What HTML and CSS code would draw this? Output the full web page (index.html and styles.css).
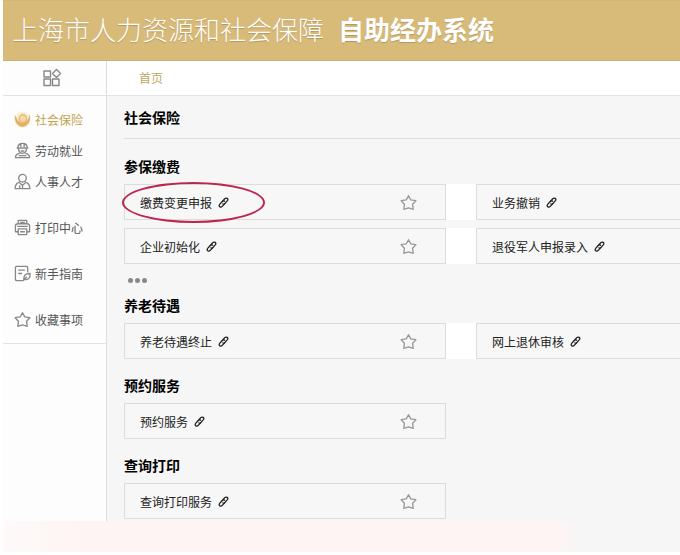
FILE: index.html
```html
<!DOCTYPE html>
<html lang="zh-CN">
<head>
<meta charset="utf-8">
<meta name="viewport" content="width=device-width, initial-scale=1">
<title>上海市人力资源和社会保障自助经办系统</title>
<link rel="stylesheet" href="styles.css">
</head>
<body>
<svg class="sprite" aria-hidden="true">
  <symbol id="star" viewBox="0 0 18 18"><path d="M9 1.8 L11.4 6.200 L16.800 7.1 L13.3 10.9 L14 16.2 L9 14.800 L4 16.2 L4.7 10.9 L1.2 7.1 L6.600 6.200 Z"/></symbol>
  <symbol id="link" viewBox="0 0 12 12"><path d="M4.300 5.300 L7.300 1.900 C9.300 .2 11.600 1.800 10.300 4 L7.500 7.200 C6.600 8 5.400 7.800 5 7"/><path d="M7.500 5.200 C7 4.200 5.600 4 4.600 4.900 L1.800 8 C.3 10.200 2.700 12 4.700 10.200 L7.700 6.900"/></symbol>
</svg>
<div class="page">
  <header class="banner">
    <h1 class="title"><span class="org">上海市人力资源和社会保障</span><strong>自助经办系统</strong></h1>
  </header>
  <div class="body">
    <aside class="side">
      <button class="apps" type="button" aria-label="全部应用">
        <svg viewBox="0 0 20 20"><path d="M2 3h6.500v6H2z M2 11h6.500v6.500H2z M10.500 11H17v6.500h-6.500z"/><path d="M14.500 1.500 L18.500 5.500 L14.500 9.500 L10.500 5.500 Z"/></svg>
      </button>
      <nav class="menu">
        <ul class="group">
          <li><a class="item active" href="#"><svg viewBox="0 0 18 18"><circle class="halo" cx="9" cy="9" r="8.500"/><path class="swirl" d="M1 4 C0 10 3 15.500 9 17 C15 16 18.500 10 16.500 3.500 C16 9 13 12.500 9 12.500 C4.500 12.500 3 8 1 4Z"/><circle class="pearl" cx="9.500" cy="8" r="4"/></svg>社会保险</a></li>
          <li><a class="item" href="#"><svg viewBox="0 0 18 18"><path d="M4 6.500 C4 3.500 6 1.500 9 1.500 S14 3.500 14 6.500 M2.800 6.500H15.200 M7.300 2v4.500 M10.700 2v4.500 M4.800 7 C4.800 10 6.500 12 9 12 S13.200 10 13.200 7 M7 9.500h4 M6 12 C3 12.500 1.500 14 1.500 16.500 H16.500 C16.500 14 15 12.500 12 12 M5 14.500h8"/></svg>劳动就业</a></li>
          <li><a class="item" href="#"><svg viewBox="0 0 18 18"><circle cx="9" cy="5.500" r="4"/><path d="M6.500 9.500 C3 10.500 1.200 12.500 1.200 16.500 H16.800 C16.800 12.500 15 10.500 11.500 9.500 M6 10.500 L9 13 L12 10.500 M9 13v3.500 M6 13v3.500"/></svg>人事人才</a></li>
        </ul>
        <ul class="group">
          <li><a class="item" href="#"><svg viewBox="0 0 18 18"><path d="M4.500 5V1.500h9V5 M4.500 13.500H1.500V7.500C1.500 6 2.500 5 4 5h10c1.500 0 2.500 1 2.500 2.500v6h-3 M4.500 10.500h9v6h-9z M3.500 7.800h11 M6.500 13.500h5 M6.500 3.500h5"/></svg>打印中心</a></li>
        </ul>
        <ul class="group">
          <li><a class="item" href="#"><svg viewBox="0 0 18 18"><path d="M9.500 16.500H3c-1 0-1.500-.5-1.500-1.500V3c0-1 .5-1.500 1.500-1.500h10c1 0 1.500.5 1.500 1.500v5 M4.500 5.500h7 M4.500 9h4 M17 9 C12 9 10 11 10.500 15.500 C15.500 16 17.500 13.500 17 9Z M9.500 16.800L13.500 12.500"/></svg>新手指南</a></li>
        </ul>
        <ul class="group">
          <li><a class="item" href="#"><svg><use href="#star"/></svg>收藏事项</a></li>
        </ul>
      </nav>
    </aside>
    <div class="content">
      <nav class="crumbs"><a href="#">首页</a></nav>
      <main class="main">
        <h2 class="heading">社会保险</h2>
        <section class="section first">
          <h3 class="heading">参保缴费</h3>
          <div class="cards">
            <div class="pair">
              <div class="card marked"><a href="#">缴费变更申报<svg class="link"><use href="#link"/></svg></a><button class="fav" type="button" aria-label="收藏"><svg><use href="#star"/></svg></button></div>
              <div class="card"><a href="#">业务撤销<svg class="link"><use href="#link"/></svg></a></div>
            </div>
            <div class="pair">
              <div class="card"><a href="#">企业初始化<svg class="link"><use href="#link"/></svg></a><button class="fav" type="button" aria-label="收藏"><svg><use href="#star"/></svg></button></div>
              <div class="card"><a href="#">退役军人申报录入<svg class="link"><use href="#link"/></svg></a></div>
            </div>
          </div>
          <button class="more" type="button" aria-label="更多"><i></i><i></i><i></i></button>
        </section>
        <section class="section">
          <h3 class="heading">养老待遇</h3>
          <div class="cards">
            <div class="pair">
              <div class="card"><a href="#">养老待遇终止<svg class="link"><use href="#link"/></svg></a><button class="fav" type="button" aria-label="收藏"><svg><use href="#star"/></svg></button></div>
              <div class="card"><a href="#">网上退休审核<svg class="link"><use href="#link"/></svg></a></div>
            </div>
          </div>
        </section>
        <section class="section">
          <h3 class="heading">预约服务</h3>
          <div class="cards">
            <div class="pair single">
              <div class="card"><a href="#">预约服务<svg class="link"><use href="#link"/></svg></a><button class="fav" type="button" aria-label="收藏"><svg><use href="#star"/></svg></button></div>
            </div>
          </div>
        </section>
        <section class="section">
          <h3 class="heading">查询打印</h3>
          <div class="cards">
            <div class="pair single">
              <div class="card"><a href="#">查询打印服务<svg class="link"><use href="#link"/></svg></a><button class="fav" type="button" aria-label="收藏"><svg><use href="#star"/></svg></button></div>
            </div>
          </div>
        </section>
      </main>
    </div>
  </div>
  <footer class="foot"></footer>
</div>
</body>
</html>
```
FILE: styles.css
```css
*,
*::after {
  box-sizing: border-box;
}

body {
  margin: 0;
  background: #fff;
  color: #222;
  font: 12px/20px "Noto Sans CJK SC", sans-serif;
}

h1, h2, h3, ul {
  margin: 0;
  padding: 0;
}

ul {
  list-style: none;
}

a {
  color: inherit;
  text-decoration: none;
}

button {
  padding: 0;
  border: 0;
  background: none;
  cursor: pointer;
}

svg {
  fill: none;
  stroke: currentColor;
  stroke-width: 1.4;
  stroke-linejoin: round;
}

.sprite {
  display: none;
}

.page {
  margin-left: 3px;
  overflow: hidden;
}

.banner {
  height: 61px;
  padding: 8px 9px 0;
  border-top: 1px solid #d0b67c;
  border-bottom: 1px solid #cbb17c;
  background: #d9bb79;
}

.title {
  display: flex;
  gap: 14px;
  color: #fff;
  font-size: 26px;
  line-height: 40px;
  font-weight: 300;
  text-shadow: 0 1px 1px #b3965c;
  white-space: nowrap;
}

.title strong {
  font-weight: 700;
}

.body {
  display: flex;
}

.side {
  flex: 0 0 104px;
  border-right: 1px solid #dcdedf;
  background: #fdfdfd;
}

.apps {
  display: flex;
  align-items: center;
  justify-content: center;
  width: 100%;
  height: 35px;
  padding-right: 6px;
  border-bottom: 1px solid #e0e3e4;
  color: #888;
}

.apps svg {
  width: 20px;
  height: 20px;
}

.menu {
  display: grid;
  gap: 15px;
  padding: 8px 0;
  border-bottom: 1px solid #dfe3e4;
}

.item {
  display: flex;
  align-items: center;
  gap: 4px;
  height: 31px;
  padding-left: 11px;
  color: #555;
}

.item svg {
  width: 17px;
  height: 17px;
  color: #888;
}

.item.active {
  color: #c4a550;
}

.halo {
  fill: #fbeed6;
  stroke: none;
}

.swirl {
  fill: #e3b066;
  stroke: none;
}

.item .pearl {
  fill: #f6d9aa;
  stroke: #e6b873;
}

.content {
  flex: 1;
  min-width: 0;
  background: #f6f6f6;
}

.crumbs {
  height: 35px;
  padding: 7px 32px;
  border-bottom: 1px solid #e3e4e5;
  background: #fff;
  color: #bfa764;
}

.main {
  padding: 11px 0 2px 17px;
}

.heading {
  color: #000;
  font-size: 14px;
  line-height: 20px;
  font-weight: 700;
}

.first {
  margin-top: 11px;
  border-top: 1px solid #dcdcdc;
  padding-top: 17px;
}

.section + .section {
  margin-top: 16px;
}

.section.first + .section {
  margin-top: 0;
}

.cards {
  display: grid;
  gap: 8px;
  margin-top: 8px;
}

.pair {
  display: grid;
  grid-template-columns: minmax(0, 322px) minmax(0, 1fr);
  gap: 30px;
  background: linear-gradient(#fff, #fff) 322px 0 / 30px 100% no-repeat;
}

.single {
  background: none;
}

.card {
  position: relative;
  display: flex;
  align-items: center;
  justify-content: space-between;
  height: 36px;
  padding: 1px 28px 0 15px;
  border: 1px solid #dadcdd;
  background: #f7f7f7;
  white-space: nowrap;
}

.card + .card {
  border-right: 0;
}

.card a {
  display: flex;
  align-items: center;
  gap: 6px;
}

.link {
  width: 11px;
  height: 11px;
}

.fav {
  display: flex;
  color: #999;
}

.fav svg {
  width: 17px;
  height: 17px;
}

.marked::after {
  content: "";
  position: absolute;
  top: -3px;
  left: -3px;
  width: 143px;
  height: 41px;
  border: 2px solid #bd254f;
  border-radius: 50%;
  pointer-events: none;
}

.more {
  display: flex;
  gap: 2px;
  padding: 14px 4px 12px;
}

.more i {
  width: 5px;
  height: 5px;
  border-radius: 50%;
  background: #888;
}

.foot {
  height: 31px;
  background: linear-gradient(90deg, #fdfaf9, #fff4f4 12%, #fff4f4 82%, #f6f6f6 85%);
}
```
